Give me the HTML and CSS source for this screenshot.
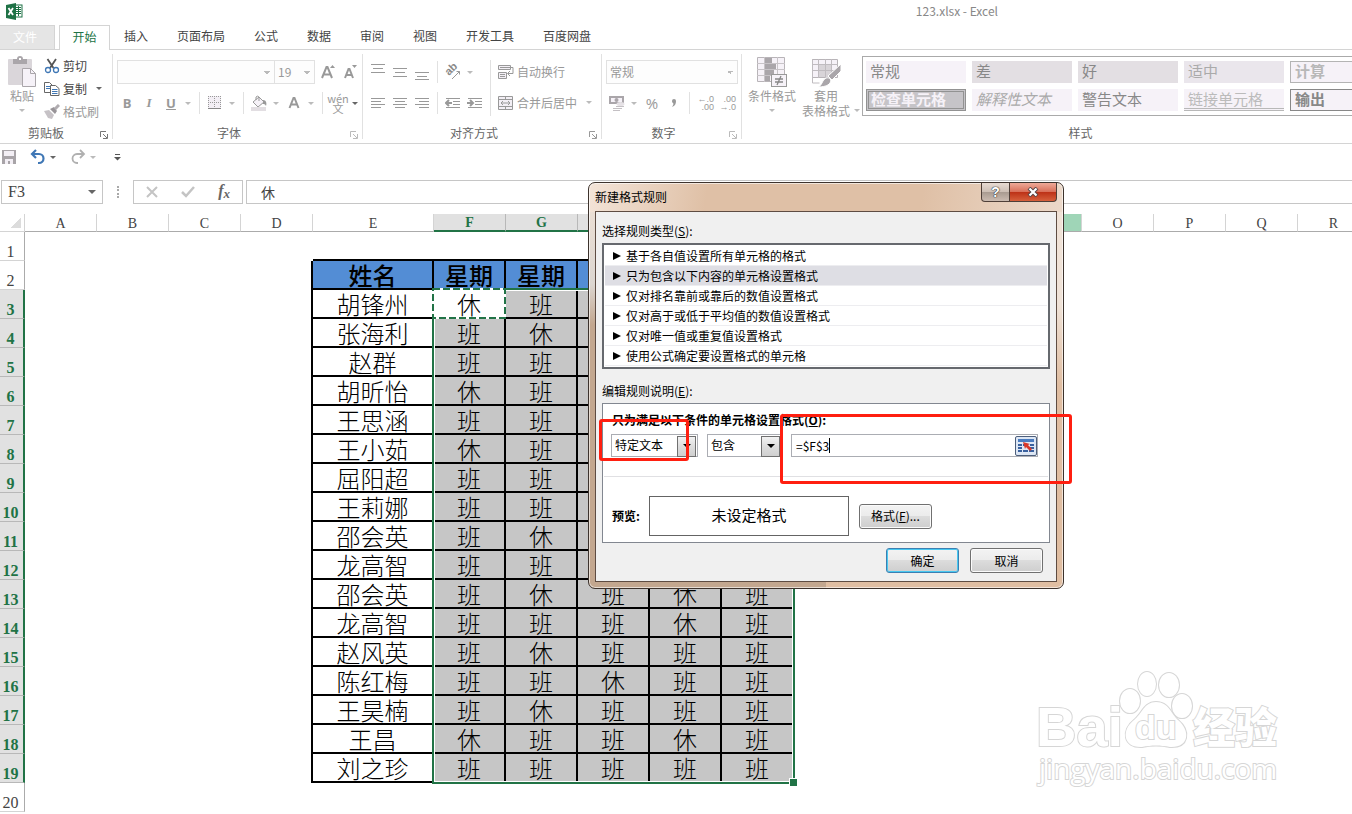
FILE: index.html
```html
<!DOCTYPE html>
<html lang="zh-CN">
<head>
    <meta charset="UTF-8">
    <meta name="viewport" content="width=device-width, initial-scale=1.0">
    <title>123.xlsx - Excel</title>
    <link rel="stylesheet" href="styles.css">
</head>
<body>
    <!-- Title bar -->
    <header class="titlebar">
        <svg class="logo" width="17" height="17" viewBox="0 0 17 17">
            <rect x="9" y="2" width="7" height="12" fill="#fff" stroke="#1f7246"/>
            <path d="M10 4.500h5M10 6.500h5M10 8.500h5M10 10.500h5M12.500 3v10" stroke="#1f7246"/>
            <path d="M0 2L10 0v17L0 15z" fill="#1f7246"/>
            <path d="M2.500 5l4.500 7M7 5l-4.500 7" stroke="#fff" stroke-width="1.800"/>
        </svg>
        <h1 class="title">123.xlsx - Excel</h1>
    </header>

    <!-- Ribbon tabs -->
    <nav class="tabs">
        <button class="tab tab-file">文件</button>
        <button class="tab tab-active">开始</button>
        <button class="tab">插入</button>
        <button class="tab">页面布局</button>
        <button class="tab">公式</button>
        <button class="tab">数据</button>
        <button class="tab">审阅</button>
        <button class="tab">视图</button>
        <button class="tab">开发工具</button>
        <button class="tab">百度网盘</button>
    </nav>

    <!-- Ribbon -->
    <section class="ribbon">
        <div class="group clipboard">
            <div class="group-body">
                <button class="big-btn">
                    <svg width="30" height="32" viewBox="0 0 30 32">
                        <rect x="1" y="3" width="24" height="26" rx="1" fill="#dad6da"/>
                        <path d="M6 3h4a3 3 0 0 1 6 0h4v5H6z" fill="#aaa6aa"/>
                        <rect x="12" y="2" width="2" height="2" fill="#fff"/>
                        <path d="M15.500 12.500h8l5 5v13h-13z" fill="#f6f2f8" stroke="#aaa6aa"/>
                        <path d="M23.500 12.500v5h5" fill="none" stroke="#aaa6aa"/>
                    </svg>
                    <span>粘贴</span>
                    <i class="caret light"></i>
                </button>
                <div class="stack">
                    <button class="small-btn on">
                        <svg width="16" height="16" viewBox="0 0 16 16">
                            <path d="M3.500 1l6 9M12 1l-6 9" stroke="#555" stroke-width="1.800" fill="none"/>
                            <circle cx="4" cy="12" r="2.500" fill="none" stroke="#3f77b5" stroke-width="1.300"/>
                            <circle cx="12" cy="12" r="2.500" fill="none" stroke="#3f77b5" stroke-width="1.300"/>
                        </svg>
                        <span>剪切</span>
                    </button>
                    <button class="small-btn on">
                        <svg width="16" height="16" viewBox="0 0 16 16">
                            <path d="M.5 1.500h5l3 3v7h-8z" fill="#fff" stroke="#666"/>
                            <path d="M2 5.500h4M2 7.500h4" stroke="#3f77b5"/>
                            <path d="M6.500 4.500h5l3.500 3v7h-8.500z" fill="#fff" stroke="#666"/>
                            <path d="M8 8.500h5.500M8 10.500h5.500M8 12.500h5.500" stroke="#3f77b5"/>
                        </svg>
                        <span>复制</span>
                        <i class="caret"></i>
                    </button>
                    <button class="small-btn">
                        <svg width="16" height="16" viewBox="0 0 16 16">
                            <path d="M0 7l5-1 5 5-2 4-4-1z" fill="#c6c2c6"/>
                            <path d="M6 5l5 5 2-3-3-4z" fill="#989498"/>
                            <path d="M11 5l4-4" stroke="#b0acb0" stroke-width="3"/>
                        </svg>
                        <span>格式刷</span>
                    </button>
                </div>
            </div>
            <div class="group-name">剪贴板<svg class="launcher on" width="8" height="8" viewBox="0 0 8 8"><path d="M.5 6V.5H6M3 3l4 4M7.500 3v4.500H3"/></svg></div>
        </div>

        <div class="group font">
            <div class="group-body rows">
                <div class="row">
                    <select class="box font-name" aria-label="字体"><option></option></select>
                    <select class="box font-size" aria-label="字号"><option>19</option></select>
                    <button class="tool grow" aria-label="增大字号">
                        <svg width="18" height="16" viewBox="0 0 18 16"><path d="M2 14L6.500 3h1L12 14M4 10.500h6" class="thick"/><path d="M10 4l2.500-3L15 4z" class="solid"/></svg>
                    </button>
                    <button class="tool" aria-label="减小字号">
                        <svg width="18" height="16" viewBox="0 0 18 16"><path d="M3 14L6.500 5h1L11 14M4.500 11h5" class="thick"/><path d="M10 1l2.500 3L15 1z" class="solid"/></svg>
                    </button>
                </div>
                <div class="row">
                    <button class="tool letter"><b>B</b></button>
                    <button class="tool letter"><em>I</em></button>
                    <button class="tool letter"><u>U</u></button>
                    <i class="caret light"></i>
                    <span class="sep"></span>
                    <button class="tool" aria-label="边框">
                        <svg width="14" height="14" viewBox="0 0 14 14"><rect width="13" height="13" fill="#f3eff5"/><path d="M.5 0v12M6.500 0v12M12.500 0v12M0 .5h13M0 6.500h13" stroke="#999" stroke-dasharray="1 1"/><path d="M0 12.500h13" stroke="#888"/></svg>
                    </button>
                    <i class="caret light"></i>
                    <span class="sep"></span>
                    <button class="tool" aria-label="填充颜色">
                        <svg width="18" height="16" viewBox="0 0 18 16"><path d="M3 7l6-5 5 5-6 5z" fill="#f6f2f8" stroke="#999"/><path d="M6 5V2a2 2 0 0 1 3 0v4" fill="none" stroke="#999"/><path d="M13 5c3 0 4 3 3 6-1-2-2-2-3-2z" fill="#999"/><rect x="1" y="12" width="15" height="4" fill="#e2dee2"/></svg>
                    </button>
                    <i class="caret light"></i>
                    <button class="tool" aria-label="字体颜色">
                        <svg width="14" height="14" viewBox="0 0 14 14"><path d="M2.500 12L6.500 2h1L11.500 12M4 8.500h6" class="thick"/></svg>
                    </button>
                    <i class="caret light"></i>
                    <span class="sep"></span>
                    <button class="tool pinyin"><span>wén</span><span>文</span></button>
                    <i class="caret"></i>
                </div>
            </div>
            <div class="group-name">字体<svg class="launcher" width="8" height="8" viewBox="0 0 8 8"><path d="M.5 6V.5H6M3 3l4 4M7.500 3v4.500H3"/></svg></div>
        </div>

        <div class="group align">
            <div class="group-body">
                <div class="rows">
                    <div class="row">
                        <button class="tool" aria-label="顶端对齐"><svg width="14" height="16" viewBox="0 0 14 16"><path d="M0 .5h14M2 4.500h10M0 8.500h14"/></svg></button>
                        <button class="tool" aria-label="垂直居中"><svg width="14" height="16" viewBox="0 0 14 16"><path d="M0 4.500h14M2 8.500h10M0 12.500h14"/></svg></button>
                        <button class="tool" aria-label="底端对齐"><svg width="14" height="16" viewBox="0 0 14 16"><path d="M0 8.500h14M2 12.500h10M0 15.500h14"/></svg></button>
                        <span class="sep"></span>
                        <button class="tool" aria-label="方向">
                            <svg width="18" height="18" viewBox="0 0 18 18"><text x="5" y="13" transform="rotate(-45 5 13)" class="slant">ab</text><path d="M8 16L15.500 8.500M15.500 8.500h-3M15.500 8.500v3"/></svg>
                        </button>
                        <i class="caret light"></i>
                    </div>
                    <div class="row">
                        <button class="tool" aria-label="左对齐"><svg width="14" height="12" viewBox="0 0 14 12"><path d="M0 1.500h14M0 4.500h10M0 7.500h14M0 10.500h10"/></svg></button>
                        <button class="tool" aria-label="居中"><svg width="14" height="12" viewBox="0 0 14 12"><path d="M0 1.500h14M2 4.500h10M0 7.500h14M2 10.500h10"/></svg></button>
                        <button class="tool" aria-label="右对齐"><svg width="14" height="12" viewBox="0 0 14 12"><path d="M0 1.500h14M4 4.500h10M0 7.500h14M4 10.500h10"/></svg></button>
                        <span class="sep"></span>
                        <button class="tool" aria-label="减少缩进"><svg width="16" height="12" viewBox="0 0 16 12"><path d="M1 1.500h14M8 4.500h7M8 7.500h7M1 10.500h14"/><path d="M1 6h6M4 3L1 6l3 3" class="thick"/></svg></button>
                        <button class="tool" aria-label="增加缩进"><svg width="16" height="12" viewBox="0 0 16 12"><path d="M1 1.500h14M8 4.500h7M8 7.500h7M1 10.500h14"/><path d="M0 6h6M3 3l3 3-3 3" class="thick"/></svg></button>
                    </div>
                </div>
                <span class="sep tall"></span>
                <div class="rows wide">
                    <button class="small-btn">
                        <svg width="16" height="16" viewBox="0 0 16 16"><path d="M.5 1.500h12v4H.5zM.5 8.500h8v6H.5z" fill="#f3eff5"/><path d="M2 3.500h13v6h-5M12 7l-2.500 2.500L12 12M2 10.500h5M2 12.500h5"/></svg>
                        <span>自动换行</span>
                    </button>
                    <button class="small-btn">
                        <svg width="16" height="16" viewBox="0 0 16 16"><path d="M.5 1.500h14v13H.5z" fill="#f3eff5"/><path d="M.5 4.500h14M.5 11.500h14M7.500 1v3M7.500 12v3M3 8h9M5 6L3 8l2 2M10 6l2 2-2 2"/></svg>
                        <span>合并后居中</span>
                        <i class="caret light"></i>
                    </button>
                </div>
            </div>
            <div class="group-name">对齐方式<svg class="launcher" width="8" height="8" viewBox="0 0 8 8"><path d="M.5 6V.5H6M3 3l4 4M7.500 3v4.500H3"/></svg></div>
        </div>

        <div class="group number">
            <div class="group-body rows">
                <div class="row">
                    <select class="box format" aria-label="数字格式"><option>常规</option></select>
                </div>
                <div class="row">
                    <button class="tool" aria-label="会计数字格式">
                        <svg width="18" height="18" viewBox="0 0 18 18"><rect x="1" y="2" width="15" height="8" fill="#aaa6aa"/><rect x="3" y="4" width="11" height="4" fill="#f6f2f8"/><circle cx="8.500" cy="6" r="2" fill="#aaa6aa"/><ellipse cx="12.500" cy="10" rx="4" ry="2" fill="#e6e2e6"/><path d="M8 12.500h8M5 14.500h9M5 16.500h7" stroke="#c4c0c4"/></svg>
                    </button>
                    <i class="caret light"></i>
                    <button class="tool percent">%</button>
                    <button class="tool" aria-label="千位分隔样式"><svg width="6" height="10" viewBox="0 0 6 10"><path d="M1 3a2 2 0 1 1 4 0c0 3-1 5-4 6 1-2 2-3 1-4a2 2 0 0 1-1-2z" class="solid"/></svg></button>
                    <span class="sep"></span>
                    <button class="tool decimal"><span>←.0</span><span>.00</span></button>
                    <button class="tool decimal"><span>.00</span><span>→.0</span></button>
                </div>
            </div>
            <div class="group-name">数字<svg class="launcher" width="8" height="8" viewBox="0 0 8 8"><path d="M.5 6V.5H6M3 3l4 4M7.500 3v4.500H3"/></svg></div>
        </div>

        <div class="group styles">
            <div class="group-body">
                <button class="big-btn">
                    <svg width="32" height="32" viewBox="0 0 32 32">
                        <path d="M1.500 1.500h27v24h-27z" fill="#f6f2f8" stroke="#b8b4b8"/>
                        <path d="M9 2h7v5H9zM9 7h11v6H9zM9 13h9v6H9zM9 19h5v6H9z" fill="#aaa6aa"/>
                        <path d="M1 7.500h28M1 13.500h28M1 19.500h28M8.500 1v25M21.500 1v25" fill="none" stroke="#c8c4c8"/>
                        <rect x="15.500" y="18.500" width="15" height="12" fill="#f6f2f8" stroke="#999"/>
                        <path d="M19 23h8M19 26h8M25 20l-4 9" stroke="#888" stroke-width="1.300"/>
                    </svg>
                    <span>条件格式</span>
                    <i class="caret light"></i>
                </button>
                <button class="big-btn">
                    <svg width="32" height="32" viewBox="0 0 32 32">
                        <path d="M2.500 3.500h25v18h-25z" fill="#f6f2f8" stroke="#b8b4b8"/>
                        <path d="M9 9h13v12H9z" fill="#d8d4d8"/>
                        <path d="M2 8.500h26M2 14.500h26M8.500 3v19M15.500 3v19M21.500 3v19M2.500 3v24h7" fill="none" stroke="#c0bcc0"/>
                        <path d="M31 8v7l-9 9-4-4z" fill="#aaa6aa" stroke="#fff"/>
                        <path d="M8 31c4-1 4-7 8-9 4-1 6 2 4 5s-7 4-12 4z" fill="#aaa6aa" stroke="#fff"/>
                    </svg>
                    <span>套用</span>
                    <span class="with-caret">表格格式<i class="caret light"></i></span>
                </button>
                <div class="gallery">
                    <button class="style plain">常规</button>
                    <button class="style bad">差</button>
                    <button class="style good">好</button>
                    <button class="style neutral">适中</button>
                    <button class="style calc">计算</button>
                    <button class="style check">检查单元格</button>
                    <button class="style explain">解释性文本</button>
                    <button class="style warn">警告文本</button>
                    <button class="style linked">链接单元格</button>
                    <button class="style output">输出</button>
                </div>
            </div>
            <div class="group-name">样式</div>
        </div>
    </section>

    <!-- Quick access toolbar -->
    <div class="quick">
        <button aria-label="保存"><svg width="16" height="16" viewBox="0 0 16 16"><path d="M1 1h14v14H1z" fill="#a8a4a8"/><path d="M3 2h10v5H3zM4 10h8v5H4z" fill="#f3eff5"/><path d="M7 12h2v3H7z" fill="#a8a4a8"/></svg></button>
        <button class="undo" aria-label="撤消"><svg width="16" height="16" viewBox="0 0 16 16"><path d="M2 5h7a4.500 4.500 0 0 1 0 9H8M6 1L2 5l4 4" fill="none" stroke="#3f77b5" stroke-width="2.200"/></svg><i class="caret"></i></button>
        <button class="redo" aria-label="恢复"><svg width="16" height="16" viewBox="0 0 16 16"><path d="M14 5H7a4.500 4.500 0 0 0 0 9h1M10 1l4 4-4 4" fill="none" stroke="#b0b0b0" stroke-width="1.800"/></svg><i class="caret light"></i></button>
        <button class="more" aria-label="自定义快速访问工具栏"><svg width="7" height="7" viewBox="0 0 7 7"><path d="M1 .5h5" stroke="#555"/><path d="M0 3h7L3.500 6.500z" fill="#555"/></svg></button>
    </div>

    <!-- Formula bar -->
    <div class="formula-bar">
        <div class="name-box">
            <input type="text" value="F3" aria-label="名称框">
            <i class="caret big"></i>
        </div>
        <span class="dots"></span>
        <div class="formula-buttons">
            <button aria-label="取消"><svg width="12" height="12" viewBox="0 0 12 12"><path d="M1 1l10 10M11 1L1 11" stroke="#c4c4c4" stroke-width="2"/></svg></button>
            <button aria-label="输入"><svg width="14" height="12" viewBox="0 0 14 12"><path d="M1 6l4 4 8-9" fill="none" stroke="#c4c4c4" stroke-width="2.500"/></svg></button>
            <button class="fx" aria-label="插入函数"><i>f<sub>x</sub></i></button>
        </div>
        <input class="formula" type="text" value="休" aria-label="编辑栏">
    </div>

    <!-- Worksheet -->
    <main class="sheet">
        <table class="grid">
            <colgroup>
                <col class="c-head"><col span="4" class="c"><col class="c-name"><col span="14" class="c">
            </colgroup>
            <thead>
                <tr>
                    <th class="corner"></th><th>A</th><th>B</th><th>C</th><th>D</th><th>E</th>
                    <th class="sel">F</th><th class="sel">G</th><th class="sel"></th><th class="sel"></th><th class="sel"></th>
                    <th></th><th></th><th></th><th class="hot"></th><th>O</th><th>P</th><th>Q</th><th>R</th><th></th>
                </tr>
            </thead>
            <tbody>
                <tr><th>1</th><td colspan="4"></td><td class="top"></td><td class="top"></td><td class="top"></td><td class="top"></td><td class="top"></td><td class="top"></td><td colspan="9"></td></tr>
                <tr class="days"><th>2</th><td colspan="4" class="edge"></td><td>姓名</td><td>星期</td><td>星期</td><td></td><td></td><td></td><td colspan="9"></td></tr>
                <tr class="data"><th>3</th><td colspan="4" class="edge"></td><td>胡锋州</td><td class="active">休</td><td>班</td><td></td><td></td><td></td><td colspan="9"></td></tr>
                <tr class="data"><th>4</th><td colspan="4" class="edge"></td><td>张海利</td><td>班</td><td>休</td><td></td><td></td><td></td><td colspan="9"></td></tr>
                <tr class="data"><th>5</th><td colspan="4" class="edge"></td><td>赵群</td><td>班</td><td>班</td><td></td><td></td><td></td><td colspan="9"></td></tr>
                <tr class="data"><th>6</th><td colspan="4" class="edge"></td><td>胡昕怡</td><td>休</td><td>班</td><td></td><td></td><td></td><td colspan="9"></td></tr>
                <tr class="data"><th>7</th><td colspan="4" class="edge"></td><td>王思涵</td><td>班</td><td>班</td><td></td><td></td><td></td><td colspan="9"></td></tr>
                <tr class="data"><th>8</th><td colspan="4" class="edge"></td><td>王小茹</td><td>休</td><td>班</td><td></td><td></td><td></td><td colspan="9"></td></tr>
                <tr class="data"><th>9</th><td colspan="4" class="edge"></td><td>屈阳超</td><td>班</td><td>班</td><td></td><td></td><td></td><td colspan="9"></td></tr>
                <tr class="data"><th>10</th><td colspan="4" class="edge"></td><td>王莉娜</td><td>班</td><td>班</td><td></td><td></td><td></td><td colspan="9"></td></tr>
                <tr class="data"><th>11</th><td colspan="4" class="edge"></td><td>邵会英</td><td>班</td><td>休</td><td></td><td></td><td></td><td colspan="9"></td></tr>
                <tr class="data"><th>12</th><td colspan="4" class="edge"></td><td>龙高智</td><td>班</td><td>班</td><td></td><td></td><td></td><td colspan="9"></td></tr>
                <tr class="data"><th>13</th><td colspan="4" class="edge"></td><td>邵会英</td><td>班</td><td>休</td><td>班</td><td>休</td><td>班</td><td colspan="9"></td></tr>
                <tr class="data"><th>14</th><td colspan="4" class="edge"></td><td>龙高智</td><td>班</td><td>班</td><td>班</td><td>休</td><td>班</td><td colspan="9"></td></tr>
                <tr class="data"><th>15</th><td colspan="4" class="edge"></td><td>赵风英</td><td>班</td><td>休</td><td>班</td><td>班</td><td>班</td><td colspan="9"></td></tr>
                <tr class="data"><th>16</th><td colspan="4" class="edge"></td><td>陈红梅</td><td>班</td><td>班</td><td>休</td><td>班</td><td>班</td><td colspan="9"></td></tr>
                <tr class="data"><th>17</th><td colspan="4" class="edge"></td><td>王昊楠</td><td>班</td><td>休</td><td>班</td><td>班</td><td>班</td><td colspan="9"></td></tr>
                <tr class="data"><th>18</th><td colspan="4" class="edge"></td><td>王昌</td><td>休</td><td>班</td><td>班</td><td>休</td><td>班</td><td colspan="9"></td></tr>
                <tr class="data"><th>19</th><td colspan="4" class="edge"></td><td>刘之珍</td><td>班</td><td>班</td><td>班</td><td>班</td><td>班</td><td colspan="9"></td></tr>
                <tr><th>20</th><td colspan="19"></td></tr>
            </tbody>
        </table>
        <div class="selection"></div>
        <svg class="ants" width="74" height="31" viewBox="0 0 74 31">
            <rect x="1" y="1" width="72" height="29" fill="none" stroke="#fff" stroke-width="2"/>
            <rect x="1" y="1" width="72" height="29" fill="none" stroke="#217346" stroke-width="2" stroke-dasharray="7 3"/>
        </svg>
    </main>

    <!-- Watermark -->
    <svg class="watermark" width="260" height="130" viewBox="0 0 260 130">
        <ellipse cx="98" cy="40" rx="10" ry="12"/>
        <ellipse cx="115" cy="23" rx="9" ry="12"/>
        <ellipse cx="137" cy="24" rx="10" ry="12"/>
        <ellipse cx="150" cy="45" rx="10" ry="12"/>
        <path d="M124 41c13 0 15 12 22 18 13 11 11 28-8 27-10-2-18-2-28 0-19 1-21-17-8-27 8-6 10-18 22-18z"/>
        <text x="4" y="85" class="wm-bai">Bai</text>
        <text x="103" y="78" class="wm-du">du</text>
        <text x="161" y="82" class="wm-cn">经验</text>
        <text x="7" y="118" class="wm-url">jingyan.baidu.com</text>
    </svg>

    <!-- New formatting rule dialog -->
    <form class="dialog">
        <div class="dialog-title">
            <h2>新建格式规则</h2>
            <button type="button" class="win-btn help">?</button>
            <button type="button" class="win-btn close" aria-label="关闭"><svg width="12" height="10" viewBox="0 0 12 10"><path d="M2 1l8 8M10 1L2 9" stroke="#544" stroke-width="4"/><path d="M2.500 1.500l7 7M9.500 1.500l-7 7" stroke="#fff" stroke-width="2.200"/></svg></button>
        </div>
        <div class="dialog-body">
            <p class="caption">选择规则类型(<u>S</u>):</p>
            <ul class="rules">
                <li>基于各自值设置所有单元格的格式</li>
                <li class="picked">只为包含以下内容的单元格设置格式</li>
                <li>仅对排名靠前或靠后的数值设置格式</li>
                <li>仅对高于或低于平均值的数值设置格式</li>
                <li>仅对唯一值或重复值设置格式</li>
                <li>使用公式确定要设置格式的单元格</li>
            </ul>
            <p class="caption">编辑规则说明(<u>E</u>):</p>
            <div class="panel">
                <label class="strong" for="kind">只为满足以下条件的单元格设置格式(<u>O</u>):</label>
                <div class="condition">
                    <span class="combo kind"><select id="kind"><option>特定文本</option></select></span>
                    <span class="combo match"><select aria-label="条件"><option>包含</option></select></span>
                    <span class="ref">
                        <input type="text" value="=$F$3" size="5" aria-label="文本">
                        <span class="cursor"></span>
                        <button type="button" class="pick" aria-label="选择区域">
                            <svg width="18" height="16" viewBox="0 0 18 16"><path d="M1 1h16v14H1z" fill="#dfe8f5"/><path d="M1 1h16v3H1z" fill="#4a7cc0"/><path d="M1 6h4v2H1zM1 9h4v2H1zM1 12h4v2H1zM6 12h5v2H6zM12 12h5v2h-5zM12 9h5v2h-5zM6 6h3v2H6zM13 6h4v2h-4z" fill="#39619f"/><path d="M6 4l7 2-2 1 4 4-2 2-4-4-1 2z" fill="#d8382a"/></svg>
                        </button>
                    </span>
                </div>
                <hr>
                <div class="preview-row">
                    <span class="strong">预览:</span>
                    <output class="preview">未设定格式</output>
                    <button type="button" class="btn">格式(<u>F</u>)...</button>
                </div>
            </div>
            <div class="actions">
                <button type="button" class="btn default">确定</button>
                <button type="button" class="btn">取消</button>
            </div>
        </div>
    </form>

    <!-- Red highlight frames -->
    <div class="mark mark-kind"></div>
    <div class="mark mark-ref"></div>
</body>
</html>
```
FILE: styles.css
```css
/* Base */
* {
    box-sizing: border-box;
}
body {
    position: relative;
    margin: 0;
    height: 100vh;
    overflow: hidden;
    display: flex;
    flex-direction: column;
    background: #fff;
    color: #444;
    font: 12px/16px "Noto Sans CJK SC", sans-serif;
}
button, input, select {
    margin: 0;
    padding: 0;
    border: 0;
    background: none;
    color: inherit;
    font: inherit;
    outline: none;
}
select {
    appearance: none;
}
svg {
    display: block;
    flex: none;
}

/* Small drop-down arrow */
.caret {
    flex: none;
    border: 3px solid transparent;
    border-top-color: #666;
    border-bottom: 0;
}
.caret.light {
    border-top-color: #bbb;
}
.caret.big {
    border-width: 4px 4px 0;
}

/* Title bar */
.titlebar {
    display: flex;
    align-items: center;
    height: 25px;
    padding: 0 0 3px 6px;
}
.title {
    margin: 0 354px 0 auto;
    color: #888;
    font-size: 12px;
    font-weight: 400;
}

/* Tabs */
.tabs {
    display: flex;
    gap: 29px;
    height: 25px;
    border-bottom: 1px solid #d4d4d4;
}
.tab {
    flex: none;
    padding-bottom: 2px;
}
.tab-file {
    width: 55px;
    margin-right: -25px;
    padding-right: 4px;
    background: #e5e5e5;
    border: 1px solid #d4d4d4;
    border-width: 1px 1px 0 0;
    color: #fff;
}
.tab-active {
    width: 51px;
    height: 25px;
    margin-right: -15px;
    background: #fff;
    border: 1px solid #d4d4d4;
    border-bottom: 0;
    color: #217346;
}

/* Ribbon */
.ribbon {
    display: flex;
    flex: none;
    height: 94px;
    padding: 4px 0;
    border-bottom: 1px solid #d4d4d4;
    overflow: hidden;
    color: #999;
}
.group {
    flex: none;
    display: flex;
    flex-direction: column;
    border-right: 1px solid #e1e1e1;
}
.group-body {
    display: flex;
    flex: 1;
}
.group-name {
    position: relative;
    height: 16px;
    margin-bottom: -2px;
    text-align: center;
    color: #666;
}
.launcher {
    position: absolute;
    right: 4px;
    bottom: 2px;
    fill: none;
    stroke: #bbb;
}
.launcher.on {
    stroke: #777;
}
.clipboard {
    width: 113px;
}
.clipboard .group-body {
    padding-left: 4px;
}
.clipboard .group-name {
    padding-right: 20px;
}
.font {
    width: 250px;
    padding-left: 3px;
}
.font .group-name {
    padding-right: 20px;
}
.align {
    width: 239px;
    padding-left: 4px;
}
.align .group-name {
    padding-right: 20px;
}
.number {
    width: 140px;
    padding-left: 4px;
}
.number .group-name {
    padding-right: 20px;
}
.styles {
    width: 675px;
    padding-left: 3px;
}
.big-btn {
    display: flex;
    flex-direction: column;
    align-items: center;
    padding: 2px 3px 0;
    line-height: 15px;
}
.big-btn > .caret {
    margin-top: 6px;
}
.with-caret {
    display: flex;
    align-items: center;
    gap: 4px;
    margin-right: -10px;
}
.stack {
    padding-left: 3px;
}
.small-btn {
    display: flex;
    align-items: center;
    gap: 3px;
    height: 23px;
}
.small-btn .caret {
    margin-left: 6px;
}
.small-btn.on {
    color: #444;
}
.stack svg {
    margin-left: 1px;
}
.rows {
    display: flex;
    flex-direction: column;
    gap: 7px;
    padding-top: 6px;
}
.row {
    display: flex;
    align-items: center;
    height: 24px;
}
.row > .caret {
    margin: 0 4px 0 3px;
}
.box {
    height: 24px;
    padding-left: 3px;
    border: 1px solid #e1e1e1;
    color: #999;
    background: linear-gradient(45deg, transparent 50%, #bbb 50%) right 7px center / 3px 3px no-repeat,
                linear-gradient(-45deg, transparent 50%, #bbb 50%) right 4px center / 3px 3px no-repeat, #fdfdfd;
}
.font-name {
    width: 158px;
    margin-left: 1px;
}
.font-size {
    width: 41px;
    margin-left: -1px;
}
.format {
    width: 132px;
}
.tool {
    display: flex;
    flex: none;
    align-items: center;
    justify-content: center;
    width: 22px;
    height: 22px;
    color: #999;
}
.tool svg, .align svg {
    fill: none;
    stroke: #999;
}
.tool .thick {
    stroke-width: 2;
}
.tool .solid {
    fill: #999;
    stroke: none;
}
.tool .slant {
    fill: #888;
    stroke: none;
    font: bold 11px "Liberation Sans", sans-serif;
}
.font .tool svg:not(:has(.thick)), .number .tool svg {
    stroke: none;
}
.grow {
    margin-left: 3px;
}
.letter {
    font: 13px "Open Sans", sans-serif;
}
.letter em {
    font-family: "Liberation Serif", serif;
    font-weight: 700;
}
.letter u {
    font-weight: 700;
}
.pinyin {
    flex-direction: column;
    font-size: 11px;
    line-height: 10px;
}
.decimal {
    flex-direction: column;
    align-items: flex-end;
    padding-right: 2px;
    font: 9px/8px "Liberation Sans", sans-serif;
}
.percent {
    font: 15px "Open Sans", sans-serif;
}
.sep {
    flex: none;
    width: 1px;
    height: 22px;
    margin: 0 4px;
    background: #e1e1e1;
}
.sep.tall {
    height: 56px;
    margin: 6px 7px 0 4px;
}
.align .rows.wide {
    gap: 8px;
}
.gallery {
    display: grid;
    grid-template-columns: repeat(5, 100px);
    grid-template-rows: 22px 22px;
    gap: 6px;
    align-self: flex-start;
    margin: 2px 0 0 9px;
    padding: 4px 3px;
    border: 1px solid #aaa;
}
.style {
    padding: 0 4px 3px;
    text-align: left;
    font-size: 15px;
    line-height: 18px;
    background: #f6f2f8;
    color: #888;
}
.bad, .good {
    background: #e3dfe3;
}
.neutral {
    background: #eae6ec;
    color: #aaa;
}
.calc {
    border: 1px solid #b4b4b4;
    font-weight: 700;
    color: #b8b8b8;
}
.check {
    border: 3px double #929292;
    padding: 0 2px 2px;
    line-height: 14px;
    background: #c6c4c8;
    font-weight: 700;
    color: #f6f2f8;
}
.explain {
    font-style: italic;
    color: #aaa;
}
.linked {
    border-bottom: 3px double #b8b8b8;
    padding-bottom: 0;
    color: #bbb;
}
.output {
    border: 1px solid #888;
    font-weight: 700;
}

/* Quick access toolbar */
.quick {
    display: flex;
    align-items: center;
    flex: none;
    height: 26px;
    padding-left: 1px;
}
.quick button {
    display: flex;
    align-items: center;
    gap: 4px;
}
.undo {
    margin-left: 13px;
}
.redo {
    margin-left: 14px;
}
.more {
    margin-left: 18px;
}

/* Formula bar */
.formula-bar {
    display: flex;
    flex: none;
    height: 24px;
    margin: 10px 0;
    padding-left: 1px;
    font: 16px "Liberation Serif", "Noto Sans CJK SC", serif;
}
.name-box {
    display: flex;
    align-items: center;
    width: 102px;
    padding: 0 6px;
    border: 1px solid #c6c6c6;
}
.name-box input {
    flex: 1;
    min-width: 0;
}
.dots {
    width: 2px;
    margin: 6px 14px 6px 14px;
    border-left: 2px dotted #aaa;
}
.formula-buttons {
    display: flex;
    align-items: center;
    justify-content: space-between;
    width: 110px;
    padding: 0 12px;
    border: 1px solid #c6c6c6;
}
.fx {
    font: bold 16px/20px "Liberation Serif", serif;
    color: #666;
}
.fx sub {
    font-size: 13px;
    vertical-align: -2px;
}
.formula {
    flex: 1;
    margin-left: 3px;
    padding-left: 14px;
    border: 1px solid #c6c6c6;
    border-right: 0;
    font-size: 14px;
}

/* Worksheet */
.sheet {
    position: relative;
    flex: 1;
    overflow: hidden;
}
.grid {
    width: 1442px;
    table-layout: fixed;
    border-collapse: separate;
    border-spacing: 0;
}
.c-head {
    width: 25px;
}
.c {
    width: 72px;
}
.c-name {
    width: 121px;
}
.grid th {
    padding: 0;
    font: 14px/14px "Liberation Serif", serif;
    color: #444;
}
.grid thead th {
    height: 18px;
    padding-top: 2px;
    border-right: 1px solid #d4d4d4;
    border-bottom: 1px solid #ababab;
}
.grid thead .sel {
    background: #e1e1e1;
    border-right-color: #b8b8b8;
    border-bottom: 2px solid #217346;
    color: #217346;
    font-weight: 700;
}
.grid thead .hot {
    background: #9fd5b7;
}
.grid thead .corner {
    border-bottom-color: #d4d4d4;
    background: linear-gradient(135deg, transparent 50%, #dcdcdc 50%) 11px 4px / 10px 10px no-repeat;
}
.grid tbody th {
    height: 29px;
    padding: 0 3px 0 0;
    vertical-align: bottom;
    border-right: 1px solid #ababab;
    border-bottom: 1px solid #d4d4d4;
    font-size: 16px;
    line-height: 17px;
}
.grid .data th {
    background: #e1e1e1;
    border-right: 2px solid #217346;
    padding-right: 2px;
    border-bottom-color: #b8b8b8;
    color: #217346;
    font-weight: 700;
}
.grid td {
    height: 29px;
    padding: 0;
    text-align: center;
    font-size: 24px;
    line-height: 27px;
    font-weight: 300;
    color: #000;
}
.grid .top {
    border-bottom: 2px solid #000;
}
.grid .edge {
    border-right: 2px solid #000;
}
.days td:not([colspan]), .data td:not([colspan]) {
    border-right: 2px solid #000;
    border-bottom: 2px solid #000;
}
.grid .days td:not([colspan]) {
    background: #538dd5;
    font-weight: 500;
}
.data td:not([colspan]) ~ td:not([colspan]) {
    background: #c6c6c6;
}
.data td:not([colspan]) ~ .active:not([colspan]) {
    background: #fff;
}
/* green frame around F3:J19, with the fill handle in its corner */
.selection {
    position: absolute;
    left: 432px;
    top: 74px;
    width: 363px;
    height: 496px;
    border: 2px solid #217346;
    box-shadow: inset 0 0 0 1px #fff;
}
.selection::after {
    content: "";
    position: absolute;
    right: -4px;
    bottom: -4px;
    width: 7px;
    height: 7px;
    background: #217346;
    border: 1px solid #fff;
    border-width: 1px 0 0 1px;
}
.ants {
    position: absolute;
    left: 432px;
    top: 74px;
}

/* Watermark */
.watermark {
    position: absolute;
    left: 1032px;
    top: 661px;
    fill: #fff;
    stroke: #d6d6d6;
    stroke-width: 2px;
    paint-order: stroke;
    font-family: "Liberation Sans", sans-serif;
}
.wm-bai {
    font-size: 56px;
    font-weight: 700;
}
.wm-du {
    font-size: 34px;
    font-weight: 700;
}
.wm-cn {
    font: 900 42px "Noto Sans CJK SC", sans-serif;
}
.wm-url {
    font: 28px "Open Sans", sans-serif;
}

/* Dialog */
.dialog {
    position: absolute;
    left: 588px;
    top: 182px;
    width: 476px;
    padding: 0 6px 6px;
    border: 1px solid #3d332d;
    border-radius: 7px;
    background: linear-gradient(100deg, #f3e4d8, #dfc0a6 25%, #dfc0a6 70%, #ecd9ca) top / 100% 29px no-repeat,
                linear-gradient(#f0e2d6, #dcd6d0 25%, #c3a78f 35%, #c3a78f) left / 50% 100% no-repeat,
                linear-gradient(#f0e2d6, #efe2d7 30%, #e0bea2 50%, #e0bea2) right / 50% 100% no-repeat;
    box-shadow: inset 0 0 0 1px rgba(255, 255, 255, 0.6);
    color: #000;
}
.dialog-title {
    display: flex;
    height: 28px;
}
.dialog-title h2 {
    flex: 1;
    margin: 0;
    font-size: 12px;
    line-height: 27px;
    font-weight: 400;
}
.win-btn {
    display: flex;
    align-items: center;
    justify-content: center;
    height: 19px;
    border: 1px solid #4e3f38;
    border-top: 0;
}
.help {
    width: 29px;
    border-radius: 0 0 0 4px;
    background: linear-gradient(#e8dbd2, #cdbfb5 48%, #a89a90 50%, #cbbbb0);
    color: #fff;
    font: bold 14px "Liberation Sans", sans-serif;
    text-shadow: 0 0 1px #333, 0 0 1px #333, 0 0 1px #333;
}
.close {
    width: 48px;
    margin-left: -1px;
    border-radius: 0 0 4px 0;
    background: linear-gradient(#eeaa98, #d9705a 48%, #bc3016 50%, #d6603c);
}
.dialog-body {
    padding: 0 6px 8px;
    border: 1px solid #5e4c42;
    background: #f0f0f0;
}
.caption {
    margin: 0;
    padding: 9px 0 2px;
    line-height: 20px;
}
.rules {
    margin: 0 0 3px;
    padding: 1px;
    border: 2px solid #66696e;
    background: #fff;
    list-style: none;
}
.rules li {
    display: flex;
    align-items: center;
    height: 20px;
    padding-left: 8px;
    border-bottom: 1px solid #ededf0;
}
.rules li::before {
    content: "";
    margin-right: 5px;
    border: 4px solid transparent;
    border-left: 8px solid #000;
    border-right: 0;
}
.rules .picked {
    background: #dedee4;
}
.panel {
    padding: 6px 1px;
    border: 1px solid #828790;
    background: #fff;
}
.strong {
    font-weight: 700;
    line-height: 20px;
}
.panel > .strong {
    display: block;
    padding-left: 8px;
}
.condition {
    display: flex;
    margin: 4px 10px 19px 7px;
}
.combo {
    position: relative;
    height: 23px;
    border: 1px solid #abadb3;
}
.combo select {
    width: 100%;
    height: 100%;
    padding: 0 0 2px 3px;
}
.combo::before {
    content: "";
    position: absolute;
    right: 1px;
    top: 1px;
    width: 17px;
    height: 19px;
    border: 1px solid #707070;
    background: linear-gradient(#f2f2f2, #ddd 50%, #cfcfcf);
    pointer-events: none;
}
.combo::after {
    content: "";
    position: absolute;
    right: 6px;
    top: 9px;
    border: 4px solid transparent;
    border-top-color: #000;
    border-bottom: 0;
    pointer-events: none;
}
.kind {
    width: 87px;
    margin-right: 9px;
}
.match {
    width: 75px;
    margin-right: 9px;
}
.ref {
    display: flex;
    align-items: center;
    flex: 1;
    height: 23px;
    padding-left: 4px;
    border: 1px solid #abadb3;
}
.ref input {
    field-sizing: content;
}
.cursor {
    width: 1px;
    height: 15px;
    background: #000;
}
.pick {
    margin-left: auto;
    padding: 1px;
    border: 1px solid #4d5f7c;
    border-radius: 2px;
    background: #dce6f4;
}
.panel hr {
    margin: 0;
    border: 0;
    border-top: 1px solid #e0e0e3;
}
.preview-row {
    display: flex;
    align-items: center;
    margin-top: 19px;
    padding-left: 8px;
}
.preview {
    width: 200px;
    height: 40px;
    margin: 0 10px 0 9px;
    border: 1px solid #646464;
    text-align: center;
    font-size: 15px;
    line-height: 36px;
}
.btn {
    width: 73px;
    height: 25px;
    border: 1px solid #707070;
    border-radius: 3px;
    background: linear-gradient(#f3f3f3, #ebebeb 50%, #dcdcdc 50%, #cecece);
    box-shadow: inset 0 0 0 1px #fbfbfb;
}
.btn.default {
    border-color: #3c7fb1;
    box-shadow: inset 0 0 0 1px #48c8f0;
}
.actions {
    display: flex;
    justify-content: flex-end;
    gap: 11px;
    margin-top: 5px;
    padding-right: 7px;
}

/* Red highlight frames */
.mark {
    position: absolute;
    border: 3px solid #ff1f10;
    border-radius: 3px;
}
.mark-kind {
    left: 599px;
    top: 419px;
    width: 90px;
    height: 42px;
}
.mark-ref {
    left: 780px;
    top: 414px;
    width: 292px;
    height: 70px;
}
```
